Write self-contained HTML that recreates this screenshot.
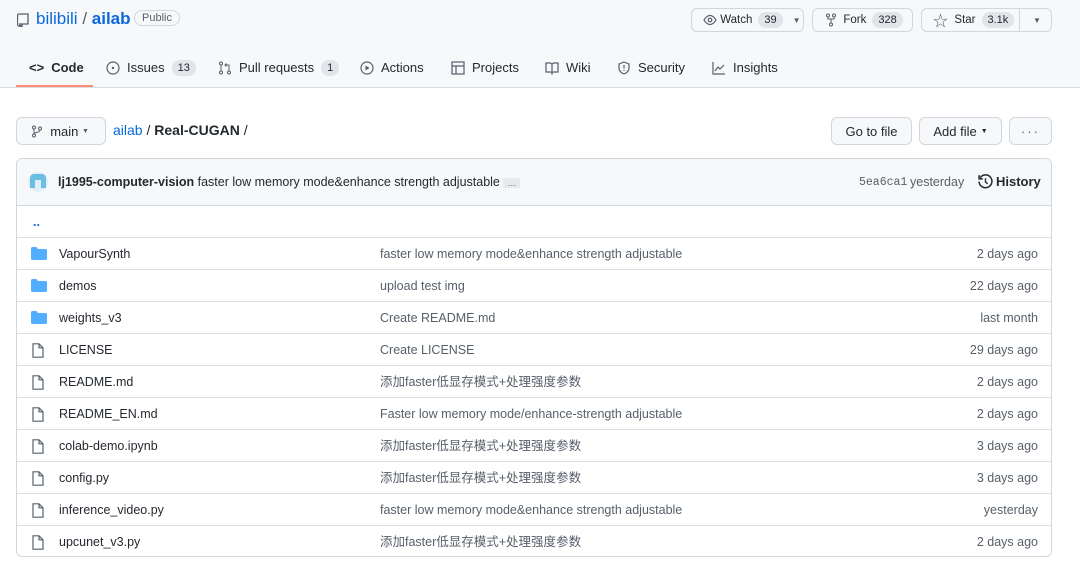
<!DOCTYPE html>
<html><head><meta charset="utf-8"><style>
*{box-sizing:border-box;margin:0;padding:0}
body{width:1080px;height:565px;overflow:hidden;background:#fff;font-family:"Liberation Sans","Noto Sans CJK SC",sans-serif;font-size:13px;color:#24292f;position:relative}
.hdr{position:absolute;left:0;top:0;width:1080px;height:88px;background:#f6f8fa;border-bottom:1px solid #d8dee4}
.abs{position:absolute}
.blue{color:#0969da}
.btn{position:absolute;border:1px solid #d0d7de;border-radius:6px;background:#f6f8fa;height:24px;font-size:11.5px;display:flex;align-items:center;font-weight:400}
.cnt{background:#e1e4e8;border-radius:10px;padding:1px 6px;font-size:11px;font-weight:400;margin-left:6px;line-height:14px}
.tab{position:absolute;top:60px;font-size:13px;display:flex;align-items:center;gap:7px;line-height:16px}
.tab svg{width:14px;height:14px}
.box{position:absolute;left:16px;top:158px;width:1036px;height:399px;border:1px solid #d0d7de;border-radius:6px;overflow:hidden}
.row{position:absolute;left:0;width:1034px;height:32px;border-top:1px solid #d8dee4;font-size:12.5px}
.row span{position:absolute;top:8px;line-height:16px;height:16px}
.row svg{position:absolute;left:14px;top:9px}
.b2{position:absolute;border:1px solid #d0d7de;border-radius:6px;background:#f6f8fa;height:28px;font-size:13px;display:flex;align-items:center;justify-content:center;font-weight:400}
</style></head><body>
<div class="hdr"></div>
<svg class="abs" style="left:17px;top:13px" width="12" height="14" viewBox="0 0 12 14"><path d="M2 1h9v10H2M2 1a1.5 1.5 0 00-1.5 1.5v9A1.5 1.5 0 002 13h1M3 11v3l1-1 1 1v-3" fill="none" stroke="#57606a" stroke-width="1.3"/></svg>
<div class="abs" style="left:36px;top:9px;font-size:17px"><span class="blue">bilibili</span> <span style="color:#57606a">/</span> <span class="blue" style="font-weight:600">ailab</span></div>
<div class="abs" style="left:134px;top:10px;border:1px solid #d0d7de;border-radius:10px;padding:1px 7px;font-size:11px;color:#57606a">Public</div>

<div class="btn" style="left:691px;top:8px;width:113px;padding-left:11px"><svg width="14" height="12" viewBox="0 0 14 12"><path d="M1 6s2.5-4.5 6-4.5S13 6 13 6s-2.5 4.5-6 4.5S1 6 1 6z" fill="none" stroke="#57606a" stroke-width="1.2"/><circle cx="7" cy="6" r="1.8" fill="none" stroke="#57606a" stroke-width="1.2"/></svg>&nbsp;Watch<span class="cnt">39</span><span style="margin-left:10px;font-size:8px;color:#57606a">▼</span></div>
<div class="btn" style="left:812px;top:8px;width:101px;padding-left:12px"><svg width="12" height="14" viewBox="0 0 12 14"><circle cx="3" cy="2.5" r="1.5" fill="none" stroke="#57606a"/><circle cx="9" cy="2.5" r="1.5" fill="none" stroke="#57606a"/><circle cx="6" cy="11.5" r="1.5" fill="none" stroke="#57606a"/><path d="M3 4v2h6V4M6 6v4" fill="none" stroke="#57606a"/></svg>&nbsp;&nbsp;Fork<span class="cnt">328</span></div>
<div class="btn" style="left:921px;top:8px;width:131px;padding-left:11px"><span style="color:#57606a;font-size:15px;font-weight:400">☆</span>&nbsp;&nbsp;Star<span class="cnt">3.1k</span><span style="position:absolute;left:97px;top:0;height:22px;border-left:1px solid #d0d7de"></span><span style="position:absolute;left:111px;font-size:8px;color:#57606a">▼</span></div>

<div class="tab" style="left:29px;font-weight:600"><span style="font-size:13px">&lt;&gt;</span>Code</div>
<div class="abs" style="left:16px;top:85px;width:77px;height:2px;background:#fd8c73"></div>
<div class="tab" style="left:106px"><svg viewBox="0 0 14 14"><circle cx="7" cy="7" r="6" fill="none" stroke="#57606a" stroke-width="1.2"/><circle cx="7" cy="7" r="1.2" fill="#57606a"/></svg>Issues<span class="cnt" style="margin-left:0">13</span></div>
<div class="tab" style="left:218px"><svg viewBox="0 0 14 14"><circle cx="3" cy="2.5" r="1.5" fill="none" stroke="#57606a"/><circle cx="3" cy="11.5" r="1.5" fill="none" stroke="#57606a"/><circle cx="11" cy="11.5" r="1.5" fill="none" stroke="#57606a"/><path d="M3 4v6M11 10V4H7M8.5 2.5L7 4l1.5 1.5" fill="none" stroke="#57606a"/></svg>Pull requests<span class="cnt" style="margin-left:0">1</span></div>
<div class="tab" style="left:360px"><svg viewBox="0 0 14 14"><circle cx="7" cy="7" r="6" fill="none" stroke="#57606a" stroke-width="1.2"/><path d="M5.5 4.5v5l4-2.5z" fill="#57606a"/></svg>Actions</div>
<div class="tab" style="left:451px"><svg viewBox="0 0 14 14"><rect x="1" y="1" width="12" height="12" fill="none" stroke="#57606a" stroke-width="1.2"/><path d="M1 5h12M5 5v8" stroke="#57606a" stroke-width="1.2"/></svg>Projects</div>
<div class="tab" style="left:545px"><svg viewBox="0 0 14 14"><path d="M1 2h4a2 2 0 012 2v8a2 2 0 00-2-1H1zM13 2H9a2 2 0 00-2 2v8a2 2 0 012-1h4z" fill="none" stroke="#57606a" stroke-width="1.2"/></svg>Wiki</div>
<div class="tab" style="left:617px"><svg viewBox="0 0 14 14"><path d="M7 1l5 2v4c0 3-2.5 5-5 6-2.5-1-5-3-5-6V3z" fill="none" stroke="#57606a" stroke-width="1.2"/><path d="M7 4v3.5M7 9v1" stroke="#57606a" stroke-width="1.2"/></svg>Security</div>
<div class="tab" style="left:712px"><svg viewBox="0 0 14 14"><path d="M1 1v12h12M3 10l3-4 2 2 4-4" fill="none" stroke="#57606a" stroke-width="1.2"/></svg>Insights</div>

<div class="b2" style="left:16px;top:117px;width:90px;justify-content:flex-start;padding-left:14px"><svg width="12" height="13" viewBox="0 0 12 13"><circle cx="3" cy="2.5" r="1.5" fill="none" stroke="#57606a"/><circle cx="9" cy="3.5" r="1.5" fill="none" stroke="#57606a"/><circle cx="3" cy="10.5" r="1.5" fill="none" stroke="#57606a"/><path d="M3 4v5M9 5c0 3-6 2-6 4" fill="none" stroke="#57606a"/></svg>&nbsp;&nbsp;main&nbsp;<span style="font-size:7px;color:#57606a">▼</span></div>
<div class="abs" style="left:113px;top:122px;font-size:14px"><span class="blue">ailab</span> / <span style="font-weight:600">Real-CUGAN</span> /</div>
<div class="b2" style="left:831px;top:117px;width:81px">Go to file</div>
<div class="b2" style="left:919px;top:117px;width:83px">Add file <span style="font-size:7px;margin-left:4px">▼</span></div>
<div class="b2" style="left:1009px;top:117px;width:43px;letter-spacing:2px;color:#57606a">···</div>

<div class="box">
<div class="abs" style="left:0;top:0;width:1034px;height:47px;background:#f6f8fa"></div>
<div class="abs" style="left:11px;top:13px;width:20px;height:20px;border-radius:50%;background:#dfeef7"></div>
<div class="abs" style="left:13px;top:15px;width:16px;height:14px;background:#6bbde3;border-radius:4px 4px 0 0"></div>
<div class="abs" style="left:18px;top:21px;width:6px;height:8px;background:#dfeef7"></div>
<div class="abs" style="left:41px;top:16px;font-size:12.5px"><span style="font-weight:600">lj1995-computer-vision</span> faster low memory mode&amp;enhance strength adjustable <span style="background:#e6e9ed;font-size:9px;padding:0 4px;border-radius:2px;color:#57606a">…</span></div>
<div class="abs" style="left:842px;top:17px;font-family:'Liberation Mono',monospace;font-size:11.5px;color:#57606a">5ea6ca1</div>
<div class="abs" style="left:893px;top:16px;color:#57606a;font-size:12.5px">yesterday</div>
<div class="abs" style="left:961px;top:15px;font-weight:600;font-size:13px;display:flex;align-items:center;gap:3px"><svg width="15" height="15" viewBox="0 0 14 14"><path d="M2 3.5A6 6 0 111 7" fill="none" stroke="#24292f" stroke-width="1.4"/><path d="M1 1v3.5h3.5" fill="none" stroke="#24292f" stroke-width="1.4"/><path d="M7 4v3.5l2 1.5" fill="none" stroke="#24292f" stroke-width="1.3"/></svg>History</div>
<div class="row" style="top:46px;height:32px;border-top:1px solid #d0d7de"><span class="blue" style="left:16px;top:8px;font-weight:700">..</span></div>
<div class="row" style="top:78px"><svg width="16" height="13" viewBox="0 0 16 13"><path d="M0 1.5A1.5 1.5 0 011.5 0h4l1.5 2h7.5A1.5 1.5 0 0116 3.5v8a1.5 1.5 0 01-1.5 1.5h-13A1.5 1.5 0 010 11.5z" fill="#54aeff"/></svg><span style="left:42px">VapourSynth</span><span style="left:363px;color:#57606a">faster low memory mode&amp;enhance strength adjustable</span><span style="right:13px;color:#57606a">2 days ago</span></div>
<div class="row" style="top:110px"><svg width="16" height="13" viewBox="0 0 16 13"><path d="M0 1.5A1.5 1.5 0 011.5 0h4l1.5 2h7.5A1.5 1.5 0 0116 3.5v8a1.5 1.5 0 01-1.5 1.5h-13A1.5 1.5 0 010 11.5z" fill="#54aeff"/></svg><span style="left:42px">demos</span><span style="left:363px;color:#57606a">upload test img</span><span style="right:13px;color:#57606a">22 days ago</span></div>
<div class="row" style="top:142px"><svg width="16" height="13" viewBox="0 0 16 13"><path d="M0 1.5A1.5 1.5 0 011.5 0h4l1.5 2h7.5A1.5 1.5 0 0116 3.5v8a1.5 1.5 0 01-1.5 1.5h-13A1.5 1.5 0 010 11.5z" fill="#54aeff"/></svg><span style="left:42px">weights_v3</span><span style="left:363px;color:#57606a">Create README.md</span><span style="right:13px;color:#57606a">last month</span></div>
<div class="row" style="top:174px"><svg width="14" height="15" viewBox="0 0 14 15"><path d="M2 .8h6l4 4v9.4H2z M8 .8v4h4" fill="none" stroke="#57606a" stroke-width="1.2"/></svg><span style="left:42px">LICENSE</span><span style="left:363px;color:#57606a">Create LICENSE</span><span style="right:13px;color:#57606a">29 days ago</span></div>
<div class="row" style="top:206px"><svg width="14" height="15" viewBox="0 0 14 15"><path d="M2 .8h6l4 4v9.4H2z M8 .8v4h4" fill="none" stroke="#57606a" stroke-width="1.2"/></svg><span style="left:42px">README.md</span><span style="left:363px;color:#57606a">添加faster低显存模式+处理强度参数</span><span style="right:13px;color:#57606a">2 days ago</span></div>
<div class="row" style="top:238px"><svg width="14" height="15" viewBox="0 0 14 15"><path d="M2 .8h6l4 4v9.4H2z M8 .8v4h4" fill="none" stroke="#57606a" stroke-width="1.2"/></svg><span style="left:42px">README_EN.md</span><span style="left:363px;color:#57606a">Faster low memory mode/enhance-strength adjustable</span><span style="right:13px;color:#57606a">2 days ago</span></div>
<div class="row" style="top:270px"><svg width="14" height="15" viewBox="0 0 14 15"><path d="M2 .8h6l4 4v9.4H2z M8 .8v4h4" fill="none" stroke="#57606a" stroke-width="1.2"/></svg><span style="left:42px">colab-demo.ipynb</span><span style="left:363px;color:#57606a">添加faster低显存模式+处理强度参数</span><span style="right:13px;color:#57606a">3 days ago</span></div>
<div class="row" style="top:302px"><svg width="14" height="15" viewBox="0 0 14 15"><path d="M2 .8h6l4 4v9.4H2z M8 .8v4h4" fill="none" stroke="#57606a" stroke-width="1.2"/></svg><span style="left:42px">config.py</span><span style="left:363px;color:#57606a">添加faster低显存模式+处理强度参数</span><span style="right:13px;color:#57606a">3 days ago</span></div>
<div class="row" style="top:334px"><svg width="14" height="15" viewBox="0 0 14 15"><path d="M2 .8h6l4 4v9.4H2z M8 .8v4h4" fill="none" stroke="#57606a" stroke-width="1.2"/></svg><span style="left:42px">inference_video.py</span><span style="left:363px;color:#57606a">faster low memory mode&amp;enhance strength adjustable</span><span style="right:13px;color:#57606a">yesterday</span></div>
<div class="row" style="top:366px"><svg width="14" height="15" viewBox="0 0 14 15"><path d="M2 .8h6l4 4v9.4H2z M8 .8v4h4" fill="none" stroke="#57606a" stroke-width="1.2"/></svg><span style="left:42px">upcunet_v3.py</span><span style="left:363px;color:#57606a">添加faster低显存模式+处理强度参数</span><span style="right:13px;color:#57606a">2 days ago</span></div>
</div>
</body></html>
